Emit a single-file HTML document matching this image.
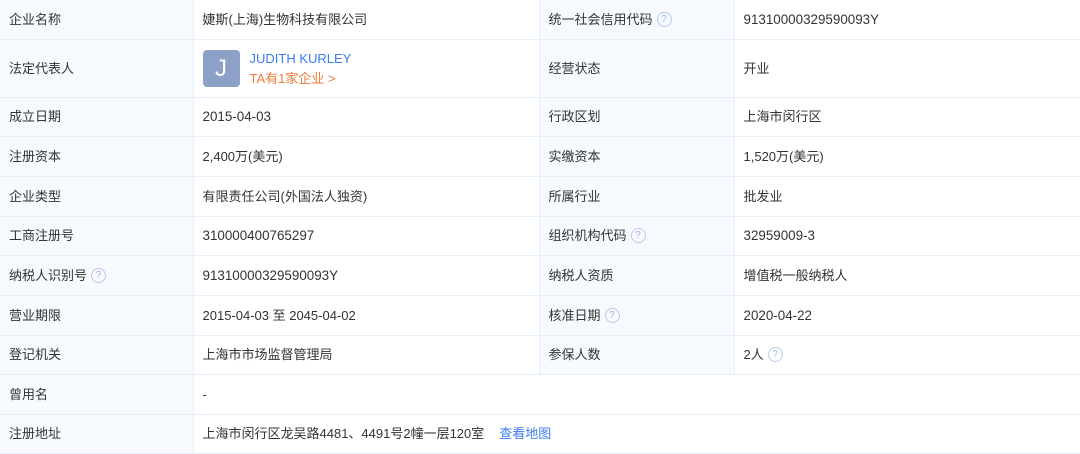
<!DOCTYPE html><html><head><meta charset="utf-8"><style>
body{margin:0;width:1080px;height:453px;overflow:hidden;background:#fff;font-family:"Liberation Sans","Noto Sans CJK SC",sans-serif;font-size:13px;color:#333}
table{border-collapse:collapse;width:1080px;table-layout:fixed}
td{border:1px solid #e6eef9;padding:1px 0 0 9px;white-space:nowrap;box-sizing:border-box;line-height:20px}
tr td:first-child{border-left:none}
td.l{background:#f6f9fd}
.n{font-size:13.4px}
.q{display:inline-block;width:13px;height:13px;border:1px solid #b7cbe8;border-radius:50%;color:#9bb6de;font-size:10px;line-height:13px;text-align:center;vertical-align:top;margin-top:2px;margin-left:4px}
a{color:#3a7bf0;text-decoration:none}
.av{display:inline-block;width:37px;height:37px;background:#8da0c8;border-radius:4px;color:#fff;font-size:24px;line-height:37px;text-align:center;vertical-align:middle;margin-right:10px}
</style></head><body>
<table>
<colgroup><col style="width:193px"><col style="width:346px"><col style="width:195px"><col style="width:346px"></colgroup>
<tr style="height:39px;border-top:none"><td class="l" style="border-top:none">企业名称</td><td style="border-top:none">婕斯(上海)生物科技有限公司</td><td class="l" style="border-top:none">统一社会信用代码<span class="q">?</span></td><td style="border-top:none" class="n">91310000329590093Y</td></tr>
<tr style="height:58px"><td class="l">法定代表人</td><td><span class="av">J</span><span style="display:inline-block;vertical-align:middle;line-height:20px"><a>JUDITH KURLEY</a><br><span style="color:#f07a3a">TA有1家企业 &gt;</span></span></td><td class="l">经营状态</td><td>开业</td></tr>
<tr style="height:39px"><td class="l">成立日期</td><td class="n">2015-04-03</td><td class="l">行政区划</td><td>上海市闵行区</td></tr>
<tr style="height:40px"><td class="l">注册资本</td><td>2,400万(美元)</td><td class="l">实缴资本</td><td>1,520万(美元)</td></tr>
<tr style="height:40px"><td class="l">企业类型</td><td>有限责任公司(外国法人独资)</td><td class="l">所属行业</td><td>批发业</td></tr>
<tr style="height:39px"><td class="l">工商注册号</td><td class="n">310000400765297</td><td class="l">组织机构代码<span class="q">?</span></td><td class="n">32959009-3</td></tr>
<tr style="height:40px"><td class="l">纳税人识别号<span class="q">?</span></td><td class="n">91310000329590093Y</td><td class="l">纳税人资质</td><td>增值税一般纳税人</td></tr>
<tr style="height:40px"><td class="l">营业期限</td><td>2015-04-03 至 2045-04-02</td><td class="l">核准日期<span class="q">?</span></td><td class="n">2020-04-22</td></tr>
<tr style="height:39px"><td class="l">登记机关</td><td>上海市市场监督管理局</td><td class="l">参保人数</td><td>2人<span class="q">?</span></td></tr>
<tr style="height:40px"><td class="l">曾用名</td><td colspan="3">-</td></tr>
<tr style="height:39px"><td class="l">注册地址</td><td colspan="3">上海市闵行区龙吴路4481、4491号2幢一层120室<a style="margin-left:15px">查看地图</a></td></tr>
</table>
</body></html>
